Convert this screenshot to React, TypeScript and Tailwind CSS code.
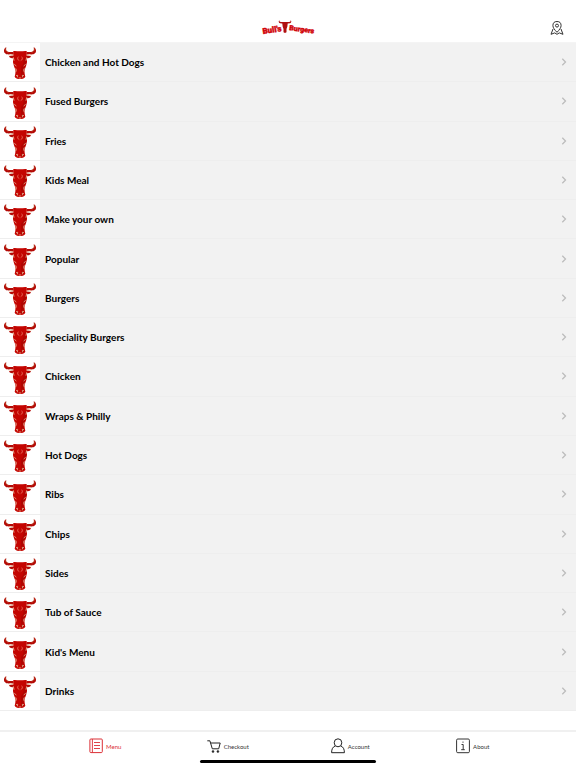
import React from 'react';

const categories = [
  'Chicken and Hot Dogs',
  'Fused Burgers',
  'Fries',
  'Kids Meal',
  'Make your own',
  'Popular',
  'Burgers',
  'Speciality Burgers',
  'Chicken',
  'Wraps & Philly',
  'Hot Dogs',
  'Ribs',
  'Chips',
  'Sides',
  'Tub of Sauce',
  "Kid's Menu",
  'Drinks',
];

const BullShape: React.FC = () => (
  <>
    <path
      fill="#b40a06"
      d="M7 0C-1 5-2 14 3 19c4 4 10 4 16 3l9 1v-8c-6-1-11 1-16-1C6 12 5 7 7 0ZM89 0c8 5 9 14 4 19-4 4-10 4-16 3l-9 1v-8c6-1 11 1 16-1 6-2 7-7 5-14Z"
    />
    <path fill="#b40a06" d="M29 26c-6-1-10 0-14 2 3 6 8 7 15 5ZM67 26c6-1 10 0 14 2-3 6-8 7-15 5Z" />
    <path
      fill="#c40501"
      d="M28 12c7-1 13 1 20 1s13-2 20-1l1 18v16l-3 12-4 10v12l2 9c-2 5-8 7-16 7s-14-2-16-7l2-9V68l-4-10-3-12V30Z"
    />
    <path fill="#8c0503" d="M60 34l7-2-1 16-5 16-3 14 1 12-8 4V60l6-8Z" opacity=".35" />
    <path fill="none" stroke="#c08a55" strokeWidth="1.4" d="M6 3c-2 6 0 10 7 13M90 3c2 6 0 10-7 13" />
    <path fill="none" stroke="#f0d9b5" strokeWidth="2.4" d="M14 25c6-2 10-1 15-1M82 25c-6-2-10-1-15-1M28 31l2 10M68 31l-2 10" />
    <path fill="none" stroke="#ec8a72" strokeWidth="2" d="M43 29c-4 5-2 10 3 12M53 29c4 5 2 10-3 12" />
    <path fill="none" stroke="#f0d9b5" strokeWidth="2" d="M31 52l6 5M65 52l-6 5M35 64l2 5-2 7M61 64l-2 5 2 7" />
    <path fill="none" stroke="#f0d9b5" strokeWidth="2" d="M36 86l5-1-1 6M60 86l-5-1 1 6M44 93h8" />
  </>
);

const Bull: React.FC = () => (
  <svg viewBox="0 0 96 96" className="size-8" aria-hidden="true">
    <BullShape />
  </svg>
);

const Logo: React.FC = () => (
  <svg viewBox="0 0 54 18" className="h-[18px] w-[54px] overflow-visible" role="img" aria-label="Bull's Burgers">
    <g fill="#d10308" stroke="#d10308" strokeWidth=".4" fontFamily="Roboto, sans-serif" fontWeight="900">
      <text x="2" y="17" fontSize="8" transform="rotate(-9 2 17)">
        Bull's
      </text>
      <text x="28" y="13" fontSize="7" transform="rotate(8 28 13)">
        Burgers
      </text>
    </g>
    <svg x="17" y="3" width="14" height="13" viewBox="0 0 96 96">
      <path
        fill="#b01010"
        d="M7 0c-9 8-7 20 4 24l17 2 3 24 6 16v24l11 6 11-6V66l6-16 3-24 17-2C96 20 98 8 89 0c3 10-3 15-13 14H20C10 15 4 10 7 0Z"
      />
    </svg>
  </svg>
);

const LocationIcon: React.FC = () => (
  <svg viewBox="0 0 14 14" className="size-3.5" fill="none" stroke="#333" aria-hidden="true">
    <path d="M7 11.3C4.5 8.7 2.9 6.7 2.9 4.6a4.1 4.1 0 0 1 8.2 0c0 2.1-1.6 4.1-4.1 6.7Z" />
    <circle cx="7" cy="4.6" r="1.5" />
    <path d="M3 8 1 13.3l3.7-1.4L7 13.3l2.3-1.4 3.7 1.4L11 8" />
  </svg>
);

const MenuIcon: React.FC = () => (
  <svg viewBox="0 0 14 16" className="mb-0.5 h-4 w-3.5" fill="none" stroke="currentColor" aria-hidden="true">
    <rect x=".9" y="1" width="12.4" height="13.6" rx="1" />
    <path d="M3.4 1v13.6M5 4.5h6M5 7.5h6M5 10.5h6" strokeWidth=".9" />
  </svg>
);

const CartIcon: React.FC = () => (
  <svg viewBox="0 0 14 14" className="mb-0.5 size-3.5" fill="none" stroke="#222" aria-hidden="true">
    <path d="M.3 1.8h2.6l2.4 8h6.4l1.5-5.8H3.6" />
    <circle cx="6" cy="12.5" r="1" fill="#222" strokeWidth=".5" />
    <circle cx="10.9" cy="12.5" r="1" fill="#222" strokeWidth=".5" />
  </svg>
);

const AccountIcon: React.FC = () => (
  <svg viewBox="0 0 14 16" className="mb-0.5 h-4 w-3.5" fill="none" stroke="#222" aria-hidden="true">
    <ellipse cx="7" cy="4.8" rx="3.8" ry="4" />
    <path d="M4.2 8C1.8 8.9.6 11 .6 14.7h12.8c0-3.7-1.2-5.8-3.6-6.7" />
  </svg>
);

const AboutIcon: React.FC = () => (
  <svg viewBox="0 0 14 16" className="mb-0.5 h-4 w-3.5" fill="none" stroke="#333" aria-hidden="true">
    <rect x=".6" y="1" width="12.8" height="13.7" rx="1.2" />
    <path d="M5.5 6.5h1.7v5.2M5.2 11.7h3.6" />
    <circle cx="7" cy="4.1" r=".7" fill="#333" stroke="none" />
  </svg>
);

const tabs = [
  { label: 'Menu', icon: MenuIcon, active: true },
  { label: 'Checkout', icon: CartIcon, active: false },
  { label: 'Account', icon: AccountIcon, active: false },
  { label: 'About', icon: AboutIcon, active: false },
];

const App: React.FC = () => {
  return (
    <div className="flex min-h-screen flex-col bg-white font-['Lato',sans-serif] text-black">
      <header className="grid h-[43px] grid-cols-3 items-end border-b border-[#f4f4f4] px-3 pb-[7px]">
        <h1 className="col-start-2 justify-self-center">
          <Logo />
        </h1>
        <button type="button" aria-label="Find a location" className="justify-self-end">
          <LocationIcon />
        </button>
      </header>

      <main className="flex flex-1 flex-col pb-[19px]">
        <ul className="grid flex-1 auto-rows-fr">
          {categories.map((name) => (
            <li key={name} className="flex border-b border-[#eeeeee]">
              <button type="button" className="flex w-full items-stretch bg-[#f2f2f2] text-left">
                <span className="flex w-10 items-end justify-center bg-white pb-0.5">
                  <Bull />
                </span>
                <span className="flex flex-1 items-center justify-between pr-2 pl-[5px]">
                  <span className="text-[10px] leading-4 font-bold">{name}</span>
                  <svg viewBox="0 0 8 8" className="size-2" fill="none" stroke="#bdbdbd" strokeWidth="1.3" aria-hidden="true">
                    <path d="M2.3.8 5.5 4 2.3 7.2" />
                  </svg>
                </span>
              </button>
            </li>
          ))}
        </ul>
      </main>

      <footer className="flex flex-col items-center border-t-2 border-[#f0f0f0] pb-[5px]">
        <nav className="grid h-7 w-full grid-cols-4 pr-[42px] pl-11">
          {tabs.map(({ label, icon: Icon, active }) => (
            <button
              key={label}
              type="button"
              aria-current={active ? 'page' : undefined}
              className={`flex items-center justify-center gap-[3px] pt-px text-[6px] leading-4 ${active ? 'text-[#db2f35]' : 'text-[#333]'}`}
            >
              <Icon />
              <span>{label}</span>
            </button>
          ))}
        </nav>
        <div className="h-[3px] w-44 rounded-full bg-black" />
      </footer>
    </div>
  );
};

export default App;
